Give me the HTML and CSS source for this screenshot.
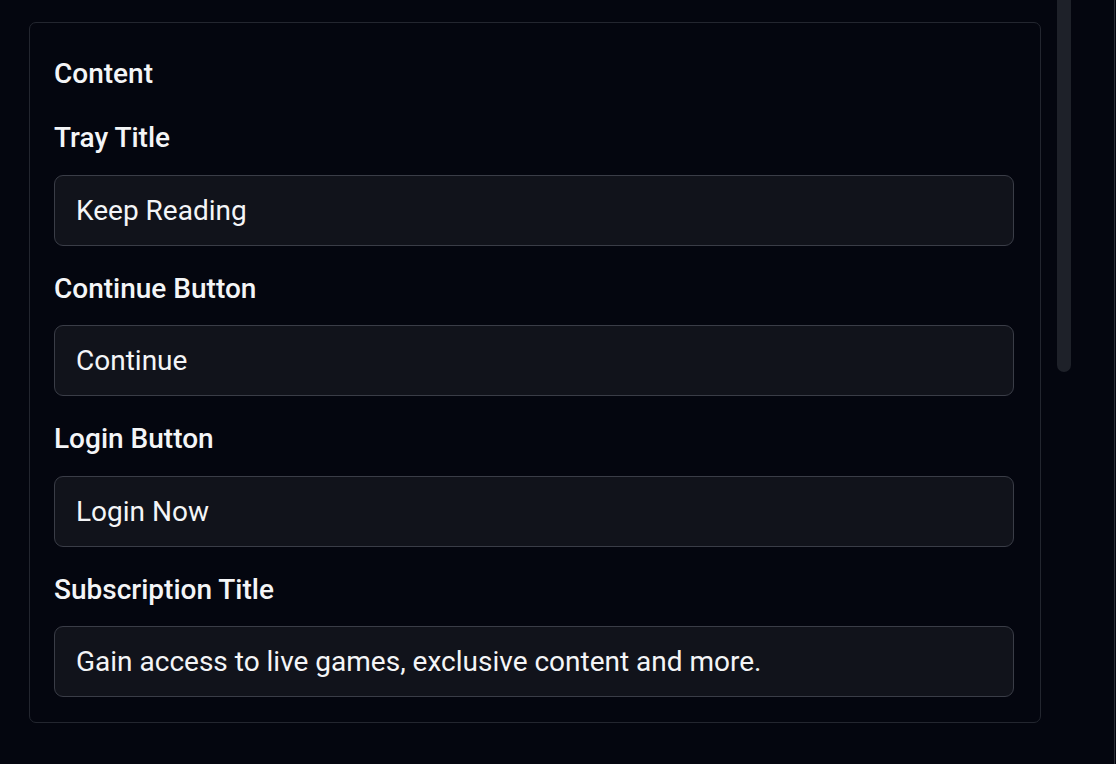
FILE: index.html
```html
<!DOCTYPE html>
<html lang="en">
<head>
<meta charset="utf-8">
<title>Content</title>
<link rel="stylesheet" href="styles.css">
</head>
<body>
<div class="page">
  <div class="scroll-area">
    <section class="card">
      <h2 class="card-title">Content</h2>
      <div class="field">
        <label class="field-label" for="f1">Tray Title</label>
        <input class="field-input" id="f1" type="text" value="Keep Reading">
      </div>
      <div class="field">
        <label class="field-label" for="f2">Continue Button</label>
        <input class="field-input" id="f2" type="text" value="Continue">
      </div>
      <div class="field">
        <label class="field-label" for="f3">Login Button</label>
        <input class="field-input" id="f3" type="text" value="Login Now">
      </div>
      <div class="field">
        <label class="field-label" for="f4">Subscription Title</label>
        <input class="field-input" id="f4" type="text" value="Gain access to live games, exclusive content and more.">
      </div>
    </section>
    <div class="scroll-thumb"></div>
  </div>
  <div class="edge"></div>
</div>
</body>
</html>
```

FILE: styles.css
```css
* { box-sizing: border-box; }
html, body {
  margin: 0;
  height: 100%;
  background: #04060f;
}
body {
  font-family: Roboto, "Noto Sans", "Liberation Sans", sans-serif;
  color: #f4f5f7;
  overflow: hidden;
}
.page {
  display: flex;
  height: 764px;
}
.scroll-area {
  position: relative;
  width: 1114px;
  padding: 22px 0 0 29px;
}
.edge {
  width: 1px;
  background: #2a2d35;
}
.card {
  width: 1012px;
  border: 1px solid #23262f;
  border-radius: 7px;
  padding: 29.5px 26px 25px 24px;
  display: flex;
  flex-direction: column;
  gap: 22px;
}
.card-title {
  margin: 0 0 0.5px;
  font-size: 28px;
  font-weight: 500;
  line-height: 42px;
}
.field {
  display: flex;
  flex-direction: column;
  gap: 15.5px;
}
.field-label {
  font-size: 28px;
  font-weight: 500;
  line-height: 42px;
}
.field-input {
  height: 71px;
  width: 100%;
  background: #11131b;
  border: 1.5px solid #3a3d47;
  border-radius: 9px;
  padding: 0 21px;
  font-family: inherit;
  font-size: 28px;
  color: #f4f5f7;
  outline: none;
}
.scroll-thumb {
  position: absolute;
  top: -10px;
  left: 1057px;
  width: 14px;
  height: 382px;
  border-radius: 7px;
  background: #1e2129;
}
```
